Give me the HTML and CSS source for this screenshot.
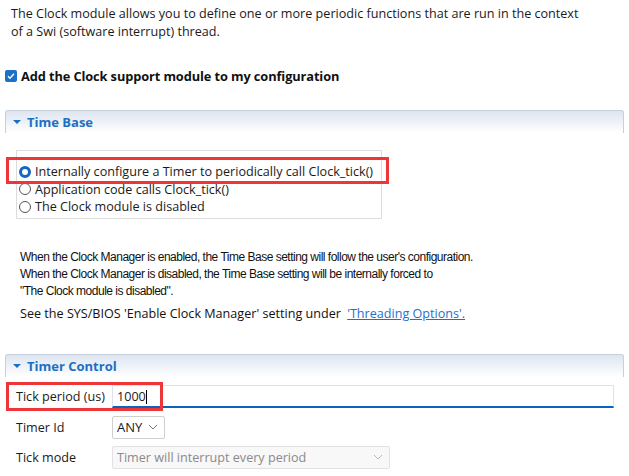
FILE: index.html
```html
<!DOCTYPE html>
<html>
<head>
<meta charset="utf-8">
<link rel="stylesheet" href="styles.css">
</head>
<body>
<div class="page">
  <p class="intro">The Clock module allows you to define one or more periodic functions that are run in the context<br>of a Swi (software interrupt) thread.</p>

  <label class="enable">
    <span class="checkbox"><svg width="12" height="12" viewBox="0 0 12 12"><path d="M3 6.2 L5 8.2 L9 3.8" fill="none" stroke="#fff" stroke-width="1.3"/></svg></span>
    <span class="enable-text">Add the Clock support module to my configuration</span>
  </label>

  <section class="section">
    <div class="sec-head"><span class="tri"></span><span class="sec-title">Time Base</span></div>
    <div class="sec-body">
      <div class="radio-group">
        <div class="radio-row"><span class="radio on"></span><span>Internally configure a Timer to periodically call Clock_tick()</span></div>
        <div class="radio-row"><span class="radio"></span><span>Application code calls Clock_tick()</span></div>
        <div class="radio-row"><span class="radio"></span><span>The Clock module is disabled</span></div>
        <div class="hl hl-radio"></div>
      </div>
      <div class="note">
        <p class="note-p">When the Clock Manager is enabled, the Time Base setting will follow the user's configuration.<br>When the Clock Manager is disabled, the Time Base setting will be internally forced to<br>"The Clock module is disabled".</p>
        <p class="note-p2">See the SYS/BIOS 'Enable Clock Manager' setting under <a class="link" href="#">'Threading Options'.</a></p>
      </div>
    </div>
  </section>

  <section class="section sec2">
    <div class="sec-head"><span class="tri"></span><span class="sec-title">Timer Control</span></div>
    <div class="form">
      <div class="frow r1">
        <span class="flabel">Tick period (us)</span>
        <div class="input">1000<span class="caret"></span></div>
        <div class="hl hl-tick"></div>
      </div>
      <div class="frow r2">
        <span class="flabel">Timer Id</span>
        <div class="select small"><span>ANY</span><svg width="10" height="6" viewBox="0 0 10 6"><path d="M1 1 L5 5 L9 1" fill="none" stroke="#777" stroke-width="1"/></svg></div>
      </div>
      <div class="frow r3">
        <span class="flabel">Tick mode</span>
        <div class="select wide disabled"><span>Timer will interrupt every period</span><svg width="10" height="6" viewBox="0 0 10 6"><path d="M1 1 L5 5 L9 1" fill="none" stroke="#bbb" stroke-width="1"/></svg></div>
      </div>
    </div>
  </section>
</div>
</body>
</html>
```

FILE: styles.css
```css
* { box-sizing: border-box; }
html, body { margin: 0; padding: 0; background: #fff; }
body {
  font-family: "Open Sans", "Noto Sans", sans-serif;
  font-size: 12.6px;
  color: #1a1a1a;
  width: 629px;
  height: 476px;
  overflow: hidden;
}
.page { padding: 0 5px 0 5px; position: relative; }
.intro {
  margin: 0;
  padding: 5px 0 0 6px;
  line-height: 18px;
}
.enable {
  display: flex;
  align-items: center;
  gap: 4px;
  margin-top: 28px;
  height: 14px;
}
.checkbox {
  width: 12px; height: 12px;
  background: #1e6fc8;
  border-radius: 2px;
  display: inline-flex;
}
.enable-text { font-weight: 700; font-size: 12.8px; color: #111; letter-spacing: -0.1px; }

.section { margin-top: 27px; }
.sec-head {
  height: 23px;
  border: 1px solid #c6d0dc;
  border-bottom: none;
  border-radius: 3px 3px 0 0;
  background: linear-gradient(#dde5f0, #ffffff);
  display: flex;
  align-items: center;
  padding-left: 7px;
  width: 619px;
}
.tri {
  width: 0; height: 0;
  border-left: 4px solid transparent;
  border-right: 4px solid transparent;
  border-top: 4px solid #1a6fc4;
  margin-right: 6px;
}
.sec-title { font-weight: 700; font-size: 13px; color: #1d6fc2; }
.sec-body { padding: 17px 0 0 11px; }
.radio-group {
  position: relative;
  width: 366px;
  height: 69px;
  border: 1px solid #dcdcdc;
  padding: 12px 0 0 2px;
}
.radio-row {
  display: flex;
  align-items: center;
  gap: 4px;
  height: 17.5px;
  line-height: 17px;
}
.radio {
  width: 12px; height: 12px;
  border: 1px solid #555;
  border-radius: 50%;
  background: #fff;
  position: relative;
}
.radio.on { border: 3px solid #1565c0; }
.hl {
  position: absolute;
  border: 3px solid #ee3538;
}
.hl-radio { left: -11px; top: 6px; width: 383px; height: 27px; }

.note {
  padding: 30px 0 0 4px;
  color: #111;
}
.note-p {
  margin: 0; line-height: 17px;
  font-family: "Liberation Sans", Arial, sans-serif;
  font-size: 12px;
  letter-spacing: -0.5px;
}
.note-p2 { margin: 5px 0 0; line-height: 17px; letter-spacing: 0; }
.link { color: #1f6fd0; text-decoration: underline; margin-left: 3px; }

.sec2 { margin-top: 32px; }
.form { padding-top: 7px; }
.frow { display: flex; align-items: center; position: relative; }
.flabel { width: 107px; padding-left: 11px; }
.r1 { height: 24px; }
.input {
  width: 502px; height: 23px;
  border: 1px solid #dde3ea;
  border-bottom: 2px solid #0a63bf;
  padding: 2px 0 0 4px;
  display: flex; align-items: center;
}
.caret { display: inline-block; width: 1px; height: 14px; background: #000; }
.hl-tick { left: 1px; top: -2px; width: 157px; height: 29px; }
.r2 { margin-top: 7px; height: 24px; }
.select {
  height: 23px;
  border: 1px solid #cfcfcf;
  border-radius: 2px;
  display: flex; align-items: center; justify-content: space-between;
  padding: 0 6px 0 4px;
}
.select.small { width: 53px; font-size: 13px; background: #fff; }
.r3 { margin-top: 6px; height: 24px; }
.select.wide { width: 278px; background: #f8f8f8; border-color: #e2e2e2; color: #8a8a8a; }
```
